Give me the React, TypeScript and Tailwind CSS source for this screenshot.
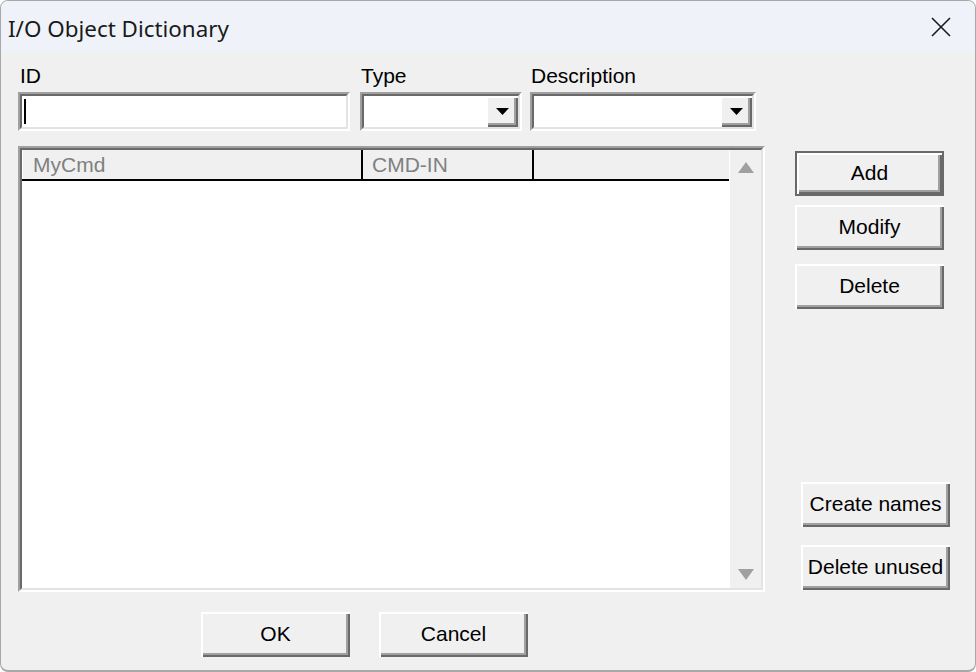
import React from 'react'

const sunken =
  'border-2 border-t-[#a0a0a0] border-l-[#a0a0a0] border-b-white border-r-white'
const sunkenInner =
  'border-2 border-t-[#696969] border-l-[#696969] border-b-[#e3e3e3] border-r-[#e3e3e3]'
const raised =
  'bg-[#f0f0f0] shadow-[inset_2px_2px_0_#ffffff,inset_-2px_-2px_0_#696969,inset_-4px_-4px_0_#a0a0a0]'

function Button({ label, isDefault = false, className = '' }: { label: string; isDefault?: boolean; className?: string }) {
  return (
    <button
      className={`h-[45px] w-[149px] flex items-center justify-center pb-[2px] text-[21px] text-black ${raised} ${
        isDefault ? 'border-2 border-[#696969]' : ''
      } ${className}`}
    >
      {label}
    </button>
  )
}

function Combo({ width }: { width: string }) {
  return (
    <div className={`${sunken} ${width} h-[39px]`}>
      <div className={`${sunkenInner} h-full bg-white flex justify-end`}>
        <div className={`w-[32px] h-full ${raised} flex items-center justify-center`}>
          <svg width="13" height="7" viewBox="0 0 13 7">
            <path d="M0 0h13L6.5 7z" fill="#000" />
          </svg>
        </div>
      </div>
    </div>
  )
}

export default function App() {
  return (
    <div
      className="w-[976px] h-[672px] bg-[#f0f0f0] border border-[#a8a8a8] border-b-2 rounded-[8px] overflow-hidden flex flex-col"
      style={{ fontFamily: '"Liberation Sans", Arial, sans-serif' }}
    >
      {/* title bar */}
      <div className="h-[52px] shrink-0 bg-[#eff3f9] flex items-center justify-between pl-[7px] pr-[24px] pt-[3px]">
        <span className="text-[22.4px] text-[#1a1a1a] font-['Noto_Sans',sans-serif]">I/O Object Dictionary</span>
        <svg width="20" height="20" viewBox="0 0 20 20" className="-mt-[3px]">
          <path d="M1 1L19 19M19 1L1 19" stroke="#1a1a1a" strokeWidth="1.6" />
        </svg>
      </div>

      <div className="flex flex-1">
        {/* left column */}
        <div className="ml-[17px] w-[747px] pt-[11px] flex flex-col">
          <div className="flex text-[21px] leading-[24px] text-black">
            <div className="w-[332px] shrink-0 flex flex-col gap-[4px]">
              <span className="pl-[2px]">ID</span>
              <div className={`${sunken} h-[39px]`}>
                <div className={`${sunkenInner} h-full bg-white flex items-center pl-[2px]`}>
                  <div className="w-[2px] h-[25px] bg-black" />
                </div>
              </div>
            </div>
            <div className="w-[162px] shrink-0 ml-[10px] flex flex-col gap-[4px]">
              <span className="pl-[1px]">Type</span>
              <Combo width="w-[162px]" />
            </div>
            <div className="w-[226px] shrink-0 ml-[8px] flex flex-col gap-[4px]">
              <span className="pl-[1px]">Description</span>
              <Combo width="w-[226px]" />
            </div>
          </div>

          {/* list view */}
          <div className={`${sunken} mt-[15px] h-[446px]`}>
            <div className={`${sunkenInner} h-full flex`}>
              <div className="flex-1 flex flex-col">
                <div className="h-[31px] flex border-b-2 border-black text-[21px] text-[#808080]">
                  <div className="w-[341px] border-r-2 border-black border-l border-l-white pl-[10px] flex items-center">MyCmd</div>
                  <div className="w-[171px] border-r-2 border-black pl-[9px] flex items-center">CMD-IN</div>
                  <div className="flex-1" />
                </div>
                <div className="flex-1 bg-white" />
              </div>
              <div className="w-[32px] border-l border-white flex flex-col items-center justify-between pt-[12px] pb-[8px]">
                <svg width="16" height="11" viewBox="0 0 16 11">
                  <path d="M8 0L16 11H0z" fill="#a0a0a0" />
                </svg>
                <svg width="16" height="11" viewBox="0 0 16 11">
                  <path d="M0 0h16L8 11z" fill="#a0a0a0" />
                </svg>
              </div>
            </div>
          </div>

          <div className="flex mt-[20px] ml-[183px] gap-[29px]">
            <Button label="OK" />
            <Button label="Cancel" />
          </div>
        </div>

        {/* right column */}
        <div className="ml-[30px] pt-[98px] flex flex-col">
          <Button label="Add" isDefault />
          <Button label="Modify" className="mt-[9px]" />
          <Button label="Delete" className="mt-[14px]" />
          <Button label="Create names" className="mt-[173px] ml-[6px]" />
          <Button label="Delete unused" className="mt-[18px] ml-[6px]" />
        </div>
      </div>
    </div>
  )
}
